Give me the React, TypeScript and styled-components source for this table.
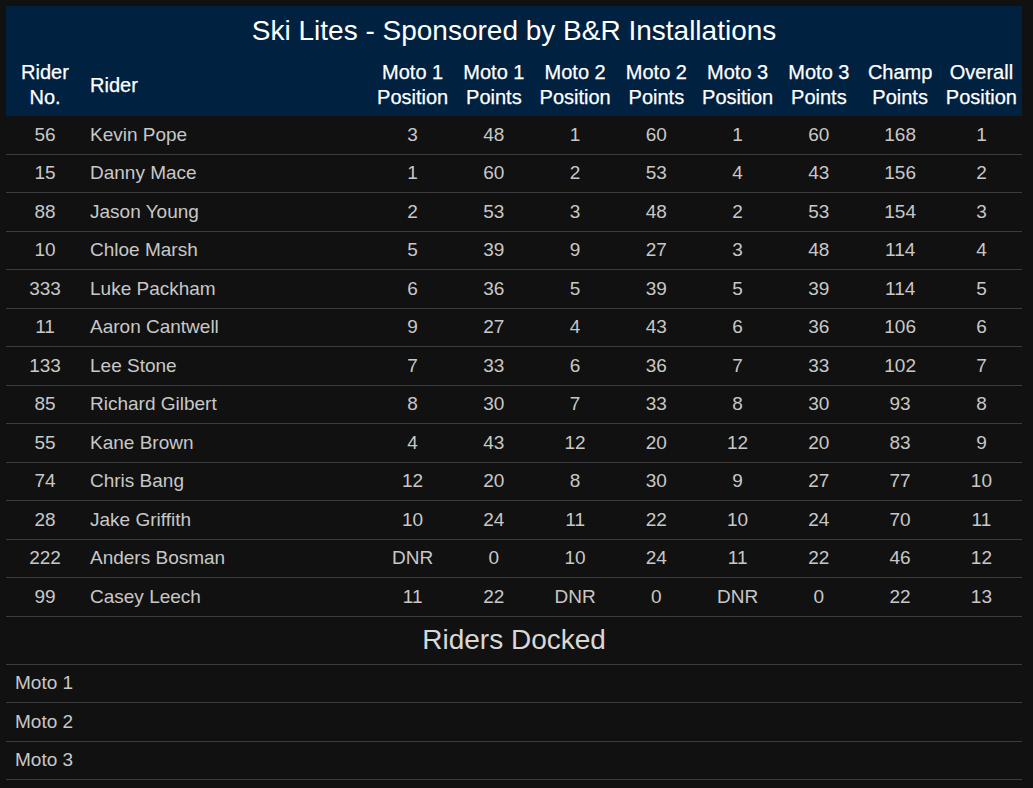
import styled, { createGlobalStyle } from "styled-components";

const GlobalStyle = createGlobalStyle`
	html, body {
		margin: 0;
		padding: 0;
		background-color: #111111;
	}
	body {
		font-family: "Liberation Sans", Arial, sans-serif;
	}
`;

const Page = styled.div`
	padding: 6px 11px 6px 6px;
	box-sizing: border-box;
	width: 1033px;
	min-height: 788px;
	background-color: #111111;
`;

const Table = styled.table`
	width: 1016px;
	border-collapse: collapse;
	table-layout: fixed;
`;

const Head = styled.thead`
	background-color: #00213f;
	color: #ffffff;
`;

const Title = styled.th`
	font-size: 28px;
	font-weight: 400;
	height: 50px;
	padding: 0;
	vertical-align: middle;
	text-align: center;
`;

const HeadCell = styled.th<{ align?: "left" | "center" }>`
	font-size: 20px;
	font-weight: 400;
	line-height: 25px;
	height: 58px;
	padding: 0 0 2px 0;
	text-align: ${(props) => props.align || "center"};
	padding-left: ${(props) => (props.align === "left" ? "6px" : "0")};
	vertical-align: middle;
	-webkit-text-stroke: 0.25px #ffffff;
`;

const Row = styled.tr`
	border-bottom: 1px solid #3c3c3c;
`;

const Cell = styled.td<{ align?: "left" | "center" }>`
	height: 37.5px;
	padding: 0;
	padding-left: ${(props) => (props.align === "left" ? "6px" : "0")};
	font-size: 19px;
	font-weight: 400;
	color: #c8c8c8;
	text-align: ${(props) => props.align || "center"};
	vertical-align: middle;
`;

const SectionTitle = styled.td`
	height: 47px;
	padding: 0;
	font-size: 28px;
	font-weight: 400;
	color: #d8d8d8;
	text-align: center;
	vertical-align: middle;
`;

const DockedCell = styled.td`
	height: 37.5px;
	padding: 0 0 0 9px;
	font-size: 19px;
	font-weight: 400;
	color: #c8c8c8;
	vertical-align: middle;
`;

type Result = {
	no: number;
	name: string;
	m1p: string;
	m1: number;
	m2p: string;
	m2: number;
	m3p: string;
	m3: number;
	champ: number;
	overall: number;
};

const results: Result[] = [
	{ no: 56, name: "Kevin Pope", m1p: "3", m1: 48, m2p: "1", m2: 60, m3p: "1", m3: 60, champ: 168, overall: 1 },
	{ no: 15, name: "Danny Mace", m1p: "1", m1: 60, m2p: "2", m2: 53, m3p: "4", m3: 43, champ: 156, overall: 2 },
	{ no: 88, name: "Jason Young", m1p: "2", m1: 53, m2p: "3", m2: 48, m3p: "2", m3: 53, champ: 154, overall: 3 },
	{ no: 10, name: "Chloe Marsh", m1p: "5", m1: 39, m2p: "9", m2: 27, m3p: "3", m3: 48, champ: 114, overall: 4 },
	{ no: 333, name: "Luke Packham", m1p: "6", m1: 36, m2p: "5", m2: 39, m3p: "5", m3: 39, champ: 114, overall: 5 },
	{ no: 11, name: "Aaron Cantwell", m1p: "9", m1: 27, m2p: "4", m2: 43, m3p: "6", m3: 36, champ: 106, overall: 6 },
	{ no: 133, name: "Lee Stone", m1p: "7", m1: 33, m2p: "6", m2: 36, m3p: "7", m3: 33, champ: 102, overall: 7 },
	{ no: 85, name: "Richard Gilbert", m1p: "8", m1: 30, m2p: "7", m2: 33, m3p: "8", m3: 30, champ: 93, overall: 8 },
	{ no: 55, name: "Kane Brown", m1p: "4", m1: 43, m2p: "12", m2: 20, m3p: "12", m3: 20, champ: 83, overall: 9 },
	{ no: 74, name: "Chris Bang", m1p: "12", m1: 20, m2p: "8", m2: 30, m3p: "9", m3: 27, champ: 77, overall: 10 },
	{ no: 28, name: "Jake Griffith", m1p: "10", m1: 24, m2p: "11", m2: 22, m3p: "10", m3: 24, champ: 70, overall: 11 },
	{ no: 222, name: "Anders Bosman", m1p: "DNR", m1: 0, m2p: "10", m2: 24, m3p: "11", m3: 22, champ: 46, overall: 12 },
	{ no: 99, name: "Casey Leech", m1p: "11", m1: 22, m2p: "DNR", m2: 0, m3p: "DNR", m3: 0, champ: 22, overall: 13 },
];

const headers = [
	["Moto 1", "Position"],
	["Moto 1", "Points"],
	["Moto 2", "Position"],
	["Moto 2", "Points"],
	["Moto 3", "Position"],
	["Moto 3", "Points"],
	["Champ", "Points"],
	["Overall", "Position"],
];

export default function App() {
	return (
		<>
			<GlobalStyle />
			<Page>
				<Table>
					<colgroup>
						<col style={{ width: 78 }} />
						<col style={{ width: 288 }} />
						{headers.map((_, i) => (
							<col key={i} style={{ width: 81.25 }} />
						))}
					</colgroup>
					<Head>
						<tr>
							<Title colSpan={10}>Ski Lites - Sponsored by B&amp;R Installations</Title>
						</tr>
						<tr>
							<HeadCell>
								Rider
								<br />
								No.
							</HeadCell>
							<HeadCell align="left">Rider</HeadCell>
							{headers.map(([a, b], i) => (
								<HeadCell key={i}>
									{a}
									<br />
									{b}
								</HeadCell>
							))}
						</tr>
					</Head>
					<tbody>
						{results.map((r) => (
							<Row key={r.no}>
								<Cell>{r.no}</Cell>
								<Cell align="left">{r.name}</Cell>
								<Cell>{r.m1p}</Cell>
								<Cell>{r.m1}</Cell>
								<Cell>{r.m2p}</Cell>
								<Cell>{r.m2}</Cell>
								<Cell>{r.m3p}</Cell>
								<Cell>{r.m3}</Cell>
								<Cell>{r.champ}</Cell>
								<Cell>{r.overall}</Cell>
							</Row>
						))}
						<Row>
							<SectionTitle colSpan={10}>Riders Docked</SectionTitle>
						</Row>
						{["Moto 1", "Moto 2", "Moto 3"].map((m) => (
							<Row key={m}>
								<DockedCell colSpan={10}>{m}</DockedCell>
							</Row>
						))}
					</tbody>
				</Table>
			</Page>
		</>
	);
}
